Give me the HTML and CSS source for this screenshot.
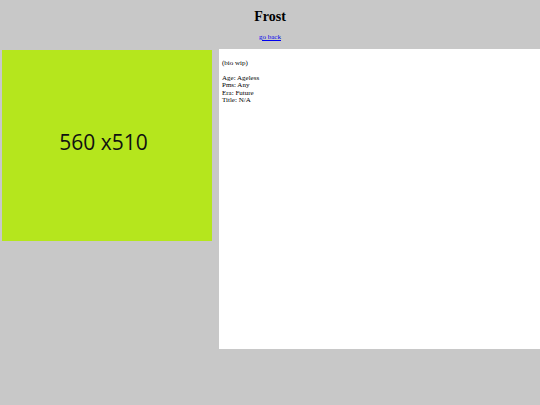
FILE: index.html
```html
<!DOCTYPE html>
<html>
<head>
<meta charset="utf-8">
<link rel="stylesheet" href="styles.css">
<title>Frost</title>
</head>
<body>
<header class="top">
  <h1 class="title">Frost</h1>
  <a class="back" href="#">go back</a>
</header>
<main class="content">
  <div class="portrait"><span class="portrait-label">560 x510</span></div>
  <section class="bio">
    <p class="bio-note">(bio wip)</p>
    <p class="bio-facts">Age: Ageless<br>Pms: Any<br>Era: Future<br>Title: N/A</p>
  </section>
</main>
</body>
</html>
```
FILE: styles.css
```css
html, body {
  margin: 0;
  padding: 0;
  background: #c8c8c8;
  font-family: "Liberation Serif", "Times New Roman", serif;
  color: #000;
}
.top {
  display: flex;
  flex-direction: column;
  align-items: center;
  padding-top: 9px;
}
.title {
  margin: 0;
  font-size: 14px;
  line-height: 16px;
  font-weight: bold;
}
.back {
  margin-top: 8px;
  font-size: 7px;
  line-height: 8px;
  color: #0000ee;
}
.content {
  display: flex;
  align-items: flex-start;
  gap: 7px;
  padding-left: 2px;
  margin-top: 8px;
}
.portrait {
  width: 210px;
  height: 191px;
  margin-top: 1px;
  background: #b5e61d;
  display: flex;
  align-items: center;
  justify-content: center;
  padding-right: 7px;
  padding-bottom: 8px;
  box-sizing: border-box;
}
.portrait-label {
  font-family: "Open Sans", "Liberation Sans", sans-serif;
  font-size: 21px;
  color: #111;
}
.bio {
  flex: 1;
  height: 300px;
  background: #fff;
  box-sizing: border-box;
  padding: 11px 3px;
  font-size: 7px;
  line-height: 7.4px;
  color: #000;
}
.bio p {
  margin: 0;
}
.bio-note {
  margin-bottom: 7.4px !important;
}
```
